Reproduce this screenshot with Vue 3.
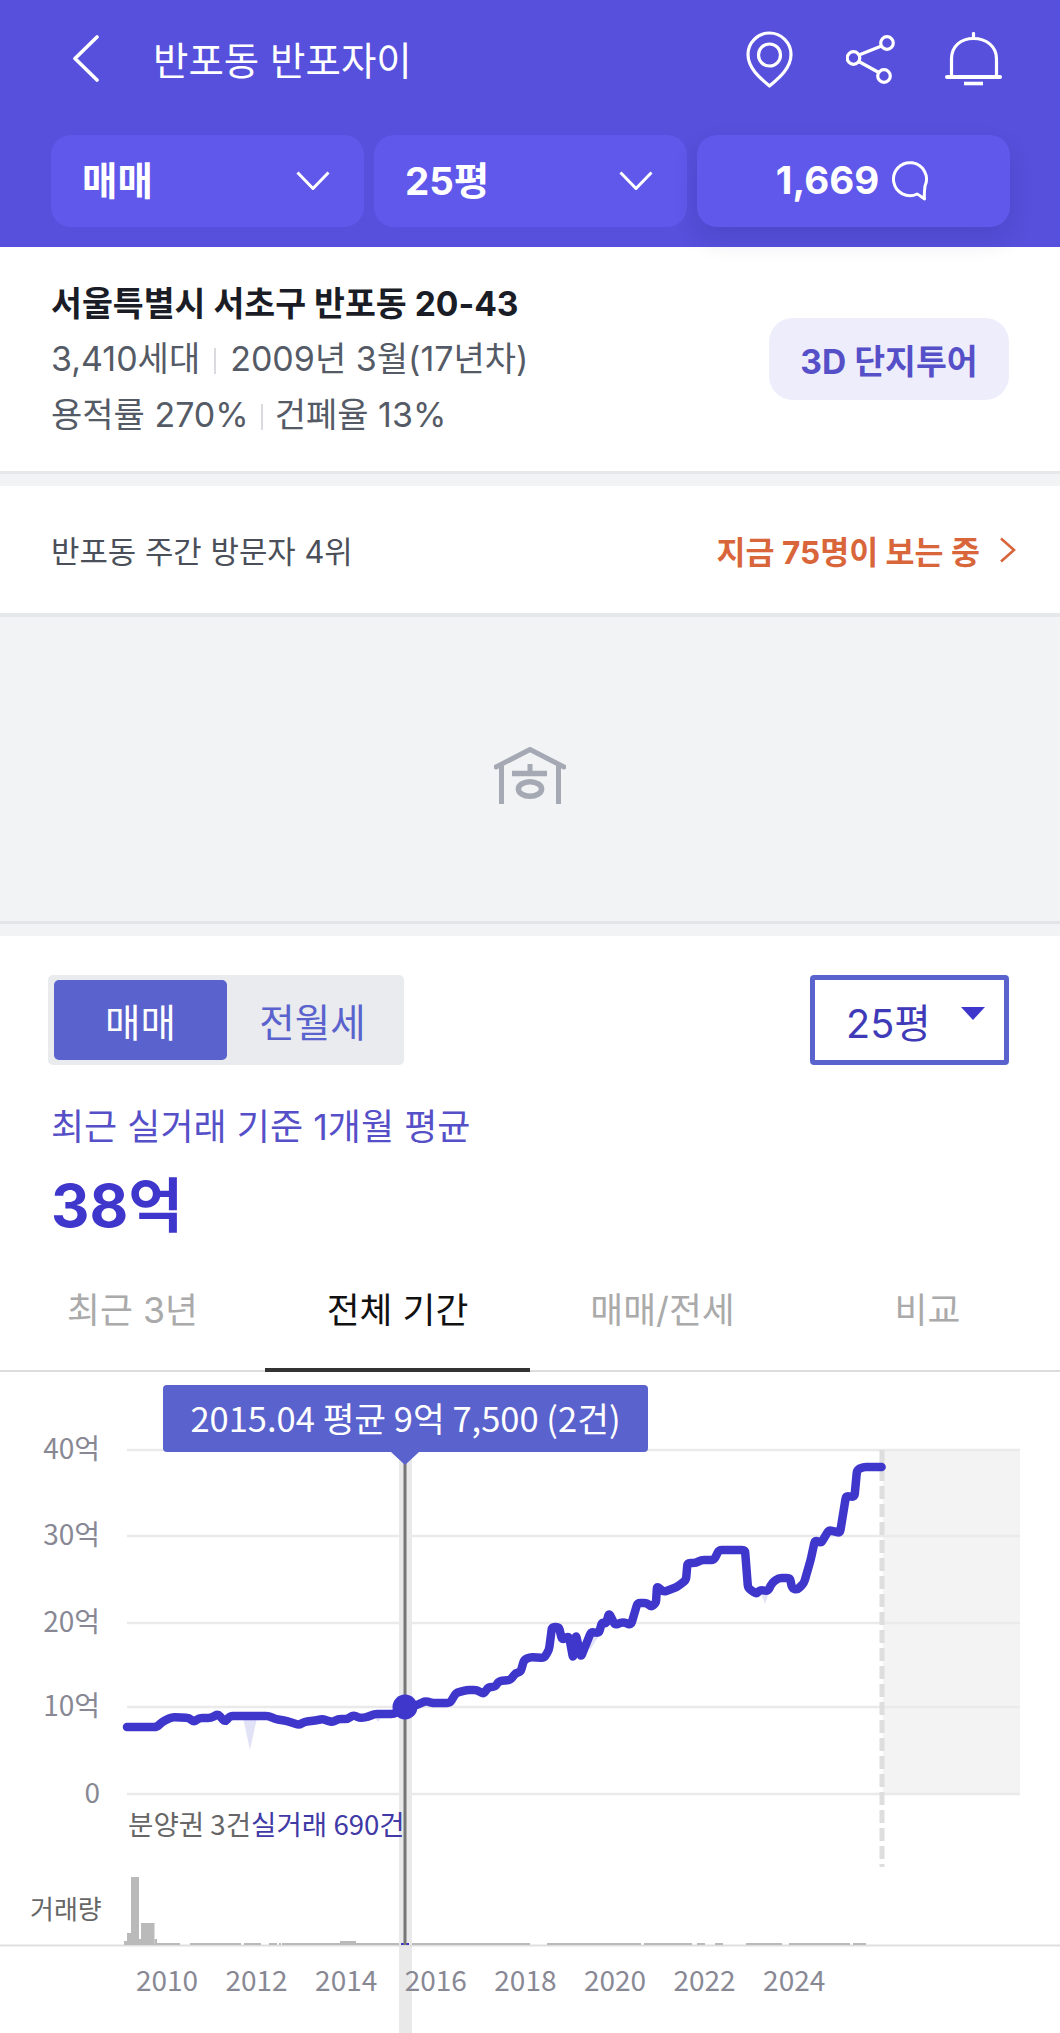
<template>
  <div class="page">
    <header class="top">
      <div class="title-row">
        <svg class="back" width="26" height="47" viewBox="0 0 26 47"><path d="M24 2 2 23.5 24 45" fill="none" stroke="#fff" stroke-width="3.6" stroke-linecap="round" stroke-linejoin="round"/></svg>
        <h1 class="title">반포동 반포자이</h1>
        <div class="top-icons">
          <svg class="pin" width="47" height="57" viewBox="0 0 47 57" fill="none" stroke="#fff" stroke-width="3.200"><path d="M23.500 55C14 47 2 37 2 23.500A21.500 21.500 0 0 1 45 23.500C45 37 33 47 23.500 55Z" stroke-linejoin="round"/><circle cx="23.500" cy="24" r="11"/></svg>
          <svg width="49" height="49" viewBox="0 0 49 49" fill="none" stroke="#fff" stroke-width="3.200"><circle cx="41" cy="8" r="6.300"/><circle cx="7.500" cy="23" r="6.300"/><circle cx="38" cy="41" r="6.300"/><path d="M35.500 11 13 20M12.800 26.500 32.800 37.500"/></svg>
          <svg width="57" height="55" viewBox="0 0 57 55" fill="none" stroke="#fff" stroke-width="3.200" stroke-linecap="round"><path d="M6.500 44V27C6.500 14 16 6.500 28.500 6.500S51.500 14 51.500 27V44"/><path d="M2 45H55" stroke-width="4"/><path d="M19 51.500H38" stroke-width="3.600" stroke-linecap="butt"/><path d="M28.500 1.500V5"/></svg>
        </div>
      </div>
      <div class="filters">
        <button class="filter">
          <span>매매</span>
          <svg width="34" height="19" viewBox="0 0 34 19"><path d="M1.500 1.500 17 17.500 32.500 1.500" fill="none" stroke="#fff" stroke-width="3"/></svg>
        </button>
        <button class="filter">
          <span>25평</span>
          <svg width="34" height="19" viewBox="0 0 34 19"><path d="M1.500 1.500 17 17.500 32.500 1.500" fill="none" stroke="#fff" stroke-width="3"/></svg>
        </button>
        <button class="filter talk">
          <span>1,669</span>
          <svg width="40" height="40" viewBox="0 0 40 40"><path d="M26.200 33A16.500 16.500 0 1 1 34 25C33.500 29 33 33 33.500 38C31 36.500 29 34.500 26.200 33Z" fill="none" stroke="#fff" stroke-width="3" stroke-linejoin="round"/></svg>
        </button>
      </div>
    </header>

    <section class="info">
      <div class="info-text">
        <div class="address">서울특별시 서초구 반포동 20-43</div>
        <div class="meta">3,410세대<i></i>2009년 3월(17년차)</div>
        <div class="meta">용적률 270%<i class="tight"></i>건폐율 13%</div>
      </div>
      <button class="tour">3D 단지투어</button>
    </section>

    <section class="visit">
      <span>반포동 주간 방문자 4위</span>
      <div class="visit-now">
        <b>지금 75명이 보는 중</b>
        <svg width="17" height="26" viewBox="0 0 17 26"><path d="M2 1.500 15 13 2 24.500" fill="none" stroke="#d9653a" stroke-width="2.600"/></svg>
      </div>
    </section>

    <section class="photo">
      <svg width="72" height="57" viewBox="0 0 72 57" fill="none" stroke="#a5a9b3" stroke-width="5"><path d="M2 20 36 2.500 70 20" stroke-linejoin="round" stroke-linecap="round"/><path d="M7.500 19V57M64.500 19V57"/><path d="M18 26.500h35" stroke-width="5.600"/><path d="M36 17V24"/><ellipse cx="36" cy="42" rx="11.600" ry="7.300" stroke-width="5.500"/></svg>
    </section>

    <section class="price">
      <div class="price-row">
        <div class="toggle">
          <span class="on">매매</span>
          <span>전월세</span>
        </div>
        <div class="size-select">
          <span>25평</span>
          <i class="caret"></i>
        </div>
      </div>
      <div class="price-label">최근 실거래 기준 1개월 평균</div>
      <div class="price-value">38억</div>
    </section>

    <nav class="tabs">
      <a v-for="t in tabs" :key="t" :class="{ active: t === '전체 기간' }">{{ t }}</a>
    </nav>

    <section class="chart">
      <svg class="chart-svg" width="1060" height="661" viewBox="0 1372 1060 661">
        <rect x="883" y="1450" width="137" height="345" fill="#f3f3f3"/>
        <line v-for="g in grid" :key="g.y" x1="127" x2="1020" :y1="g.y" :y2="g.y" stroke="#eaeaea" stroke-width="2.500"/>
        <rect x="399" y="1452" width="13" height="581" fill="#e9e9e9"/>
        <line x1="882" x2="882" y1="1450" y2="1867" stroke="#dedede" stroke-width="5" stroke-dasharray="13 5"/>
        <line x1="0" x2="1060" y1="1945.500" y2="1945.500" stroke="#dfdfdf" stroke-width="2"/>
        <rect v-for="(b, i) in bars" :key="i" :x="b[0]" :y="b[2]" :width="b[1] - b[0]" :height="1945 - b[2]" fill="#bababa"/>
        <rect x="401" y="1943" width="8" height="2" fill="#3f36cc"/>
        <path v-for="(s, i) in spikes" :key="i" :d="s" fill="#e2e2f7"/>
        <line x1="405" x2="405" y1="1460" y2="1945" stroke="#767676" stroke-width="3"/>
        <path :d="linePath" fill="none" stroke="#3f36cc" stroke-width="8.500" stroke-linecap="round" stroke-linejoin="round"/>
        <circle cx="405" cy="1707" r="12.500" fill="#3f36cc"/>

        <text v-for="g in grid" :key="g.label" x="100" :y="g.y + 9" text-anchor="end" class="axis">{{ g.label }}</text>
        <text x="128" y="1835" class="count">분양권 3건<tspan fill="#3f3aa6">실거래 690건</tspan></text>
        <text x="30" y="1919" class="vol">거래량</text>
        <text v-for="y in years" :key="y.label" :x="y.x" y="1991" text-anchor="middle" class="axis">{{ y.label }}</text>
      </svg>
      <div class="tip">2015.04 평균 9억 7,500 (2건)</div>
    </section>
  </div>
</template>

<script setup>
const tabs = ['최근 3년', '전체 기간', '매매/전세', '비교']

const grid = [
  { y: 1450, label: '40억' },
  { y: 1536, label: '30억' },
  { y: 1623, label: '20억' },
  { y: 1707, label: '10억' },
  { y: 1794, label: '0' }
]

const years = [2010, 2012, 2014, 2016, 2018, 2020, 2022, 2024].map((y, i) => ({
  label: y,
  x: 167 + i * 89.6
}))

// x start, x end, top y
const bars = [
  [124, 131, 1941], [127, 132, 1933], [131, 139, 1877], [139, 141, 1939], [141, 154.5, 1923],
  [154.5, 157, 1939], [157, 180, 1943], [190, 241, 1943], [244, 261, 1943], [269, 277, 1943],
  [279, 281, 1943], [282, 340, 1943], [340, 356, 1941], [356, 399, 1943], [412, 530, 1943],
  [547, 641, 1943], [644, 692, 1943], [697, 705, 1943], [715, 723, 1943], [746, 782, 1943],
  [789, 850, 1943], [853, 866, 1943]
]

const spikes = [
  'M243 1718 L250 1750 L257 1718Z',
  'M372 1714 L378 1722 L384 1714Z',
  'M586 1636 L590 1650 L600 1634Z',
  'M760 1590 L765 1604 L770 1590Z'
]

const pts = [
  [127, 1727], [157, 1727], [162, 1722], [172, 1717], [189, 1718], [194, 1722], [199, 1718], [211, 1718],
  [218, 1714], [225, 1722], [230, 1716], [269, 1716], [275, 1719], [287, 1721], [299, 1725], [304, 1722],
  [318, 1720], [323, 1719], [328, 1721], [333, 1722], [338, 1719], [348, 1719], [353, 1715], [360, 1718],
  [368, 1717], [374, 1714], [394, 1714], [405, 1707], [417.5, 1705], [425, 1701], [433, 1703], [450, 1703],
  [456, 1693], [466.5, 1690], [477, 1690], [483.5, 1694], [488.5, 1687], [495, 1687], [499, 1681], [510.5, 1680],
  [515.5, 1673], [520.6, 1672], [524, 1660], [530, 1657], [544, 1658], [549, 1650], [552, 1627], [559, 1627],
  [562, 1640], [569, 1636], [573, 1658], [576, 1635], [581, 1657], [591, 1632], [599, 1633], [602, 1622],
  [606, 1624], [609, 1613], [615, 1625], [623, 1622], [631, 1625], [637.5, 1603], [647, 1603], [651, 1607],
  [656, 1603], [657, 1586], [663.5, 1592], [677, 1587], [686, 1580], [687.5, 1563], [696, 1563], [701, 1560],
  [714, 1560], [719, 1550], [745, 1550], [748, 1588], [756.5, 1594], [760, 1590], [768, 1591], [772, 1583],
  [778.5, 1578], [790, 1578], [792, 1588], [797, 1590], [804, 1583], [810.6, 1560], [815, 1540], [821, 1543],
  [829, 1530], [840, 1533], [846, 1496], [854.5, 1497], [857, 1470], [863, 1467], [881.6, 1467]
]

// round the corners a little, the original line is smoothed
const toward = (a, b, d) => {
  const len = Math.hypot(b[0] - a[0], b[1] - a[1]) || 1
  const k = Math.min(d, len / 2) / len
  return [a[0] + (b[0] - a[0]) * k, a[1] + (b[1] - a[1]) * k]
}
const linePath = pts.reduce((d, p, i) => {
  if (i === 0) return `M${p[0]} ${p[1]}`
  if (i === pts.length - 1) return `${d} L${p[0]} ${p[1]}`
  const a = toward(p, pts[i - 1], 3)
  const b = toward(p, pts[i + 1], 3)
  return `${d} L${a[0]} ${a[1]} Q${p[0]} ${p[1]} ${b[0]} ${b[1]}`
}, '')
</script>

<style scoped>
.page {
  width: 1060px;
  height: 2033px;
  overflow: hidden;
  background: #fff;
  font-family: Inter, "Noto Sans CJK KR", sans-serif;
  color: #1a1d26;
}
.top {
  position: relative;
  z-index: 2;
  height: 247px;
  box-sizing: border-box;
  background: #5650dc;
  padding: 0 51px;
}
.title-row {
  height: 135px;
  display: flex;
  align-items: center;
  padding-bottom: 17px;
  box-sizing: border-box;
}
.back {
  margin-left: 22px;
  margin-right: 54px;
  margin-top: -2px;
}
.title {
  margin: 0 0 3px;
  font-size: 38.5px;
  font-weight: 400;
  color: #fff;
  flex: 1;
}
.top-icons {
  display: flex;
  align-items: center;
  gap: 50px;
  margin-right: 7px;
}
.pin {
  margin-right: 3px;
}
.filters {
  display: grid;
  grid-template-columns: repeat(3, 313px);
  gap: 10px;
}
.filter {
  height: 92px;
  border: 0;
  border-radius: 20px;
  background: #5f58ea;
  color: #fff;
  font: 700 38.5px Inter, "Noto Sans CJK KR", sans-serif;
  display: flex;
  align-items: center;
  justify-content: space-between;
  padding: 0 34px 7px 31px;
}
.filter svg {
  margin-top: 5px;
}
.filter.talk {
  justify-content: center;
  gap: 12px;
  padding: 0;
  box-shadow: 0 12px 24px rgba(30, 25, 90, 0.14);
}
.filter.talk svg {
  margin-top: 0;
}
.filter.talk span {
  margin-bottom: 3px;
}
.info {
  height: 227px;
  box-sizing: border-box;
  display: flex;
  align-items: flex-start;
  justify-content: space-between;
  padding: 30px 51px 0 51px;
  border-bottom: 3px solid #e6e7ea;
}
.address {
  font-size: 33.6px;
  font-weight: 700;
  line-height: 54px;
}
.meta {
  font-size: 34px;
  color: #555b66;
  line-height: 56px;
}
.meta i {
  display: inline-block;
  width: 2px;
  height: 26px;
  background: #d9dbdf;
  margin: 0 14px;
  vertical-align: -3px;
}
.meta i.tight {
  margin: 0 12px;
}
.tour {
  margin-top: 41px;
  width: 240px;
  height: 82px;
  border: 0;
  border-radius: 24px;
  background: #eeedfb;
  color: #5650c8;
  font: 700 33.6px Inter, "Noto Sans CJK KR", sans-serif;
}
.visit {
  height: 143px;
  box-sizing: border-box;
  border-top: 12px solid #f2f3f5;
  border-bottom: 4px solid #e6e7ea;
  display: flex;
  align-items: center;
  justify-content: space-between;
  padding: 0 44px 0 51px;
  font-size: 30.9px;
  color: #4a4f59;
}
.visit-now {
  display: flex;
  align-items: center;
  gap: 19px;
}
.visit-now b {
  font-size: 31.5px;
  color: #d9653a;
}
.photo {
  height: 319px;
  box-sizing: border-box;
  background: #f2f3f5;
  display: flex;
  align-items: center;
  justify-content: center;
  padding-bottom: 2px;
  position: relative;
}
.photo::after {
  content: "";
  position: absolute;
  left: 0;
  right: 0;
  bottom: 12px;
  height: 3px;
  background: #e4e5e9;
}
.price {
  padding: 39px 51px 0 48px;
}
.price-row {
  display: flex;
  justify-content: space-between;
}
.toggle {
  width: 356px;
  height: 90px;
  box-sizing: border-box;
  padding: 5px 6px;
  background: #e9ebee;
  border-radius: 5px;
  display: flex;
  font-size: 38.5px;
  color: #5a62cd;
}
.toggle span {
  flex: 1;
  display: flex;
  align-items: center;
  justify-content: center;
  border-radius: 5px;
}
.toggle .on {
  flex: none;
  width: 173px;
  background: #5a62cd;
  color: #fff;
}
.size-select {
  width: 199px;
  height: 90px;
  box-sizing: border-box;
  border: 5px solid #5a62cd;
  border-radius: 4px;
  display: flex;
  align-items: center;
  padding-left: 31px;
  font-size: 39.6px;
  color: #3f3ab8;
}
.caret {
  margin-left: 30px;
  margin-top: -14px;
  width: 0;
  height: 0;
  border-left: 12px solid transparent;
  border-right: 12px solid transparent;
  border-top: 13px solid #3f36cc;
}
.price-label {
  margin: 36px 0 0 3px;
  font-size: 36px;
  line-height: 52px;
  color: #5650c8;
}
.price-value {
  margin: 14px 0 0 3px;
  font-size: 59.6px;
  font-weight: 700;
  line-height: 76px;
  color: #3f36cc;
}
.tabs {
  margin-top: 37px;
  display: grid;
  grid-template-columns: repeat(4, 265px);
  height: 90px;
  border-bottom: 2px solid #dcdcdc;
}
.tabs a {
  display: flex;
  align-items: center;
  justify-content: center;
  padding-bottom: 38px;
  font-size: 35.75px;
  color: #aaa;
  margin-bottom: -2px;
}
.tabs a.active {
  color: #111;
  border-bottom: 4px solid #333;
  padding-bottom: 34px;
}
.chart {
  position: relative;
  height: 661px;
}
.chart-svg {
  display: block;
  font-family: "Noto Sans CJK KR", sans-serif;
}
.axis {
  font-size: 28px;
  fill: #888894;
}
.count {
  font-size: 27.6px;
  fill: #666;
}
.vol {
  font-size: 26px;
  fill: #666;
}
.tip {
  position: absolute;
  left: 163px;
  top: 13px;
  width: 485px;
  height: 67px;
  box-sizing: border-box;
  padding-bottom: 4px;
  border-radius: 4px;
  background: #5a62cd;
  color: #fff;
  font-family: "Noto Sans CJK KR", sans-serif;
  font-size: 34.5px;
  display: flex;
  align-items: center;
  justify-content: center;
}
.tip::after {
  content: "";
  position: absolute;
  left: 228px;
  top: 67px;
  border-left: 14px solid transparent;
  border-right: 14px solid transparent;
  border-top: 13px solid #5a62cd;
}
</style>

<style>
body {
  margin: 0;
}
</style>
